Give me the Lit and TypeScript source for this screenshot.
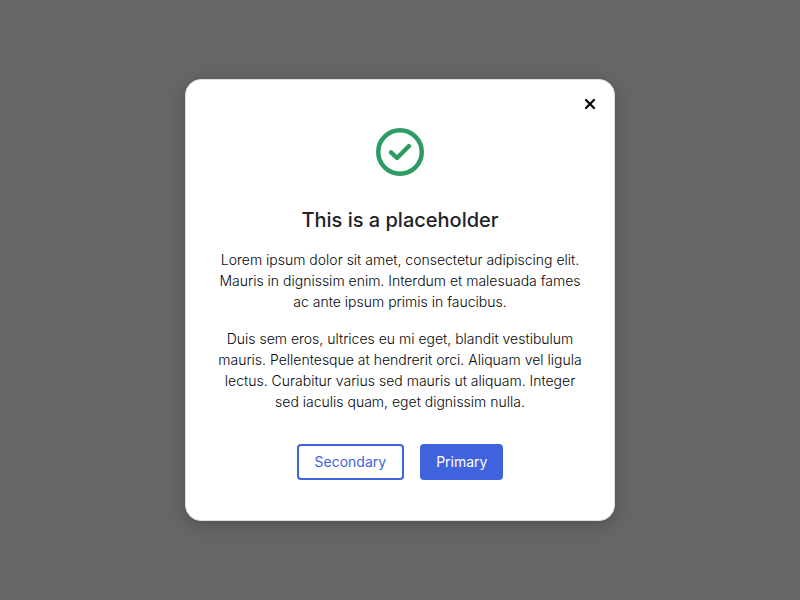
import { LitElement, html, css } from "lit";
import { customElement, property, state } from "lit/decorators.js";

@customElement("app-button")
class AppButton extends LitElement {
  @property() variant: "primary" | "secondary" = "primary";

  static styles = css`
    :host {
      display: block;
    }
    .button {
      box-sizing: border-box;
      height: 36px;
      padding: 0 16px;
      border: 2px solid #3f63dd;
      border-radius: 4px;
      font: 400 14px/20px Inter, sans-serif;
      cursor: pointer;
    }
    .primary {
      padding: 0 14px;
      background: #3f63dd;
      color: #fff;
    }
    .secondary {
      background: #fff;
      color: #3f63dd;
    }
  `;

  render() {
    return html`<button type="button" class="button ${this.variant}"><slot></slot></button>`;
  }
}

@customElement("app-root")
class AppRoot extends LitElement {
  @state() private open = true;

  static styles = css`
    :host {
      display: block;
    }
    .backdrop {
      box-sizing: border-box;
      min-height: 100vh;
      padding: 16px;
      display: flex;
      align-items: center;
      justify-content: center;
      background: #666;
      font-family: Inter, sans-serif;
    }
    .dialog {
      box-sizing: border-box;
      width: 100%;
      max-width: 430px;
      padding: 48px 32px 40px;
      position: relative;
      display: flex;
      flex-direction: column;
      align-items: center;
      background: #fff;
      border: 1px solid #e0e0e0;
      border-radius: 16px;
      box-shadow: 0 4px 16px rgba(0, 0, 0, 0.2);
      color: #1f2328;
      text-align: center;
    }
    .close {
      position: absolute;
      top: 12px;
      right: 12px;
      width: 24px;
      height: 24px;
      padding: 0;
      display: flex;
      align-items: center;
      justify-content: center;
      background: none;
      border: 0;
      color: #000;
      cursor: pointer;
    }
    .icon {
      display: block;
      width: 48px;
      height: 48px;
    }
    .title {
      margin: 30px 0 15px;
      font-size: 20px;
      line-height: 28px;
      font-weight: 500;
    }
    .text {
      display: grid;
      gap: 16px;
      color: #05080c;
      font-size: 14px;
      line-height: 21px;
      font-weight: 300;
    }
    .text p {
      margin: 0;
    }
    .actions {
      margin-top: 32px;
      display: flex;
      flex-wrap: wrap;
      justify-content: center;
      gap: 16px;
    }
  `;

  private close() {
    this.open = false;
  }

  render() {
    return html`
      <div class="backdrop">
        ${this.open
          ? html`
              <section class="dialog" role="dialog" aria-modal="true" aria-labelledby="title">
                <button class="close" type="button" aria-label="Close" @click=${this.close}>
                  <svg width="12" height="12" viewBox="0 0 12 12" fill="none" stroke="currentColor" stroke-width="2.2" stroke-linecap="round" aria-hidden="true">
                    <path d="M2 2l8 8M10 2l-8 8" />
                  </svg>
                </button>
                <svg class="icon" viewBox="0 0 48 48" fill="none" stroke="#2c9c62" stroke-linecap="round" stroke-linejoin="round" aria-hidden="true">
                  <circle cx="24" cy="24" r="21.75" stroke-width="4.5" />
                  <path d="M15 24.4l6 5.6L33 18" stroke-width="4.4" />
                </svg>
                <h1 class="title" id="title">This is a placeholder</h1>
                <div class="text">
                  <p>
                    Lorem ipsum dolor sit amet, consectetur adipiscing elit. Mauris in dignissim
                    enim. Interdum et malesuada fames ac ante ipsum primis in faucibus.
                  </p>
                  <p>
                    Duis sem eros, ultrices eu mi eget, blandit vestibulum mauris. Pellentesque at
                    hendrerit orci. Aliquam vel ligula lectus. Curabitur varius sed mauris ut
                    aliquam. Integer sed iaculis quam, eget dignissim nulla.
                  </p>
                </div>
                <div class="actions">
                  <app-button variant="secondary">Secondary</app-button>
                  <app-button variant="primary">Primary</app-button>
                </div>
              </section>
            `
          : null}
      </div>
    `;
  }
}
